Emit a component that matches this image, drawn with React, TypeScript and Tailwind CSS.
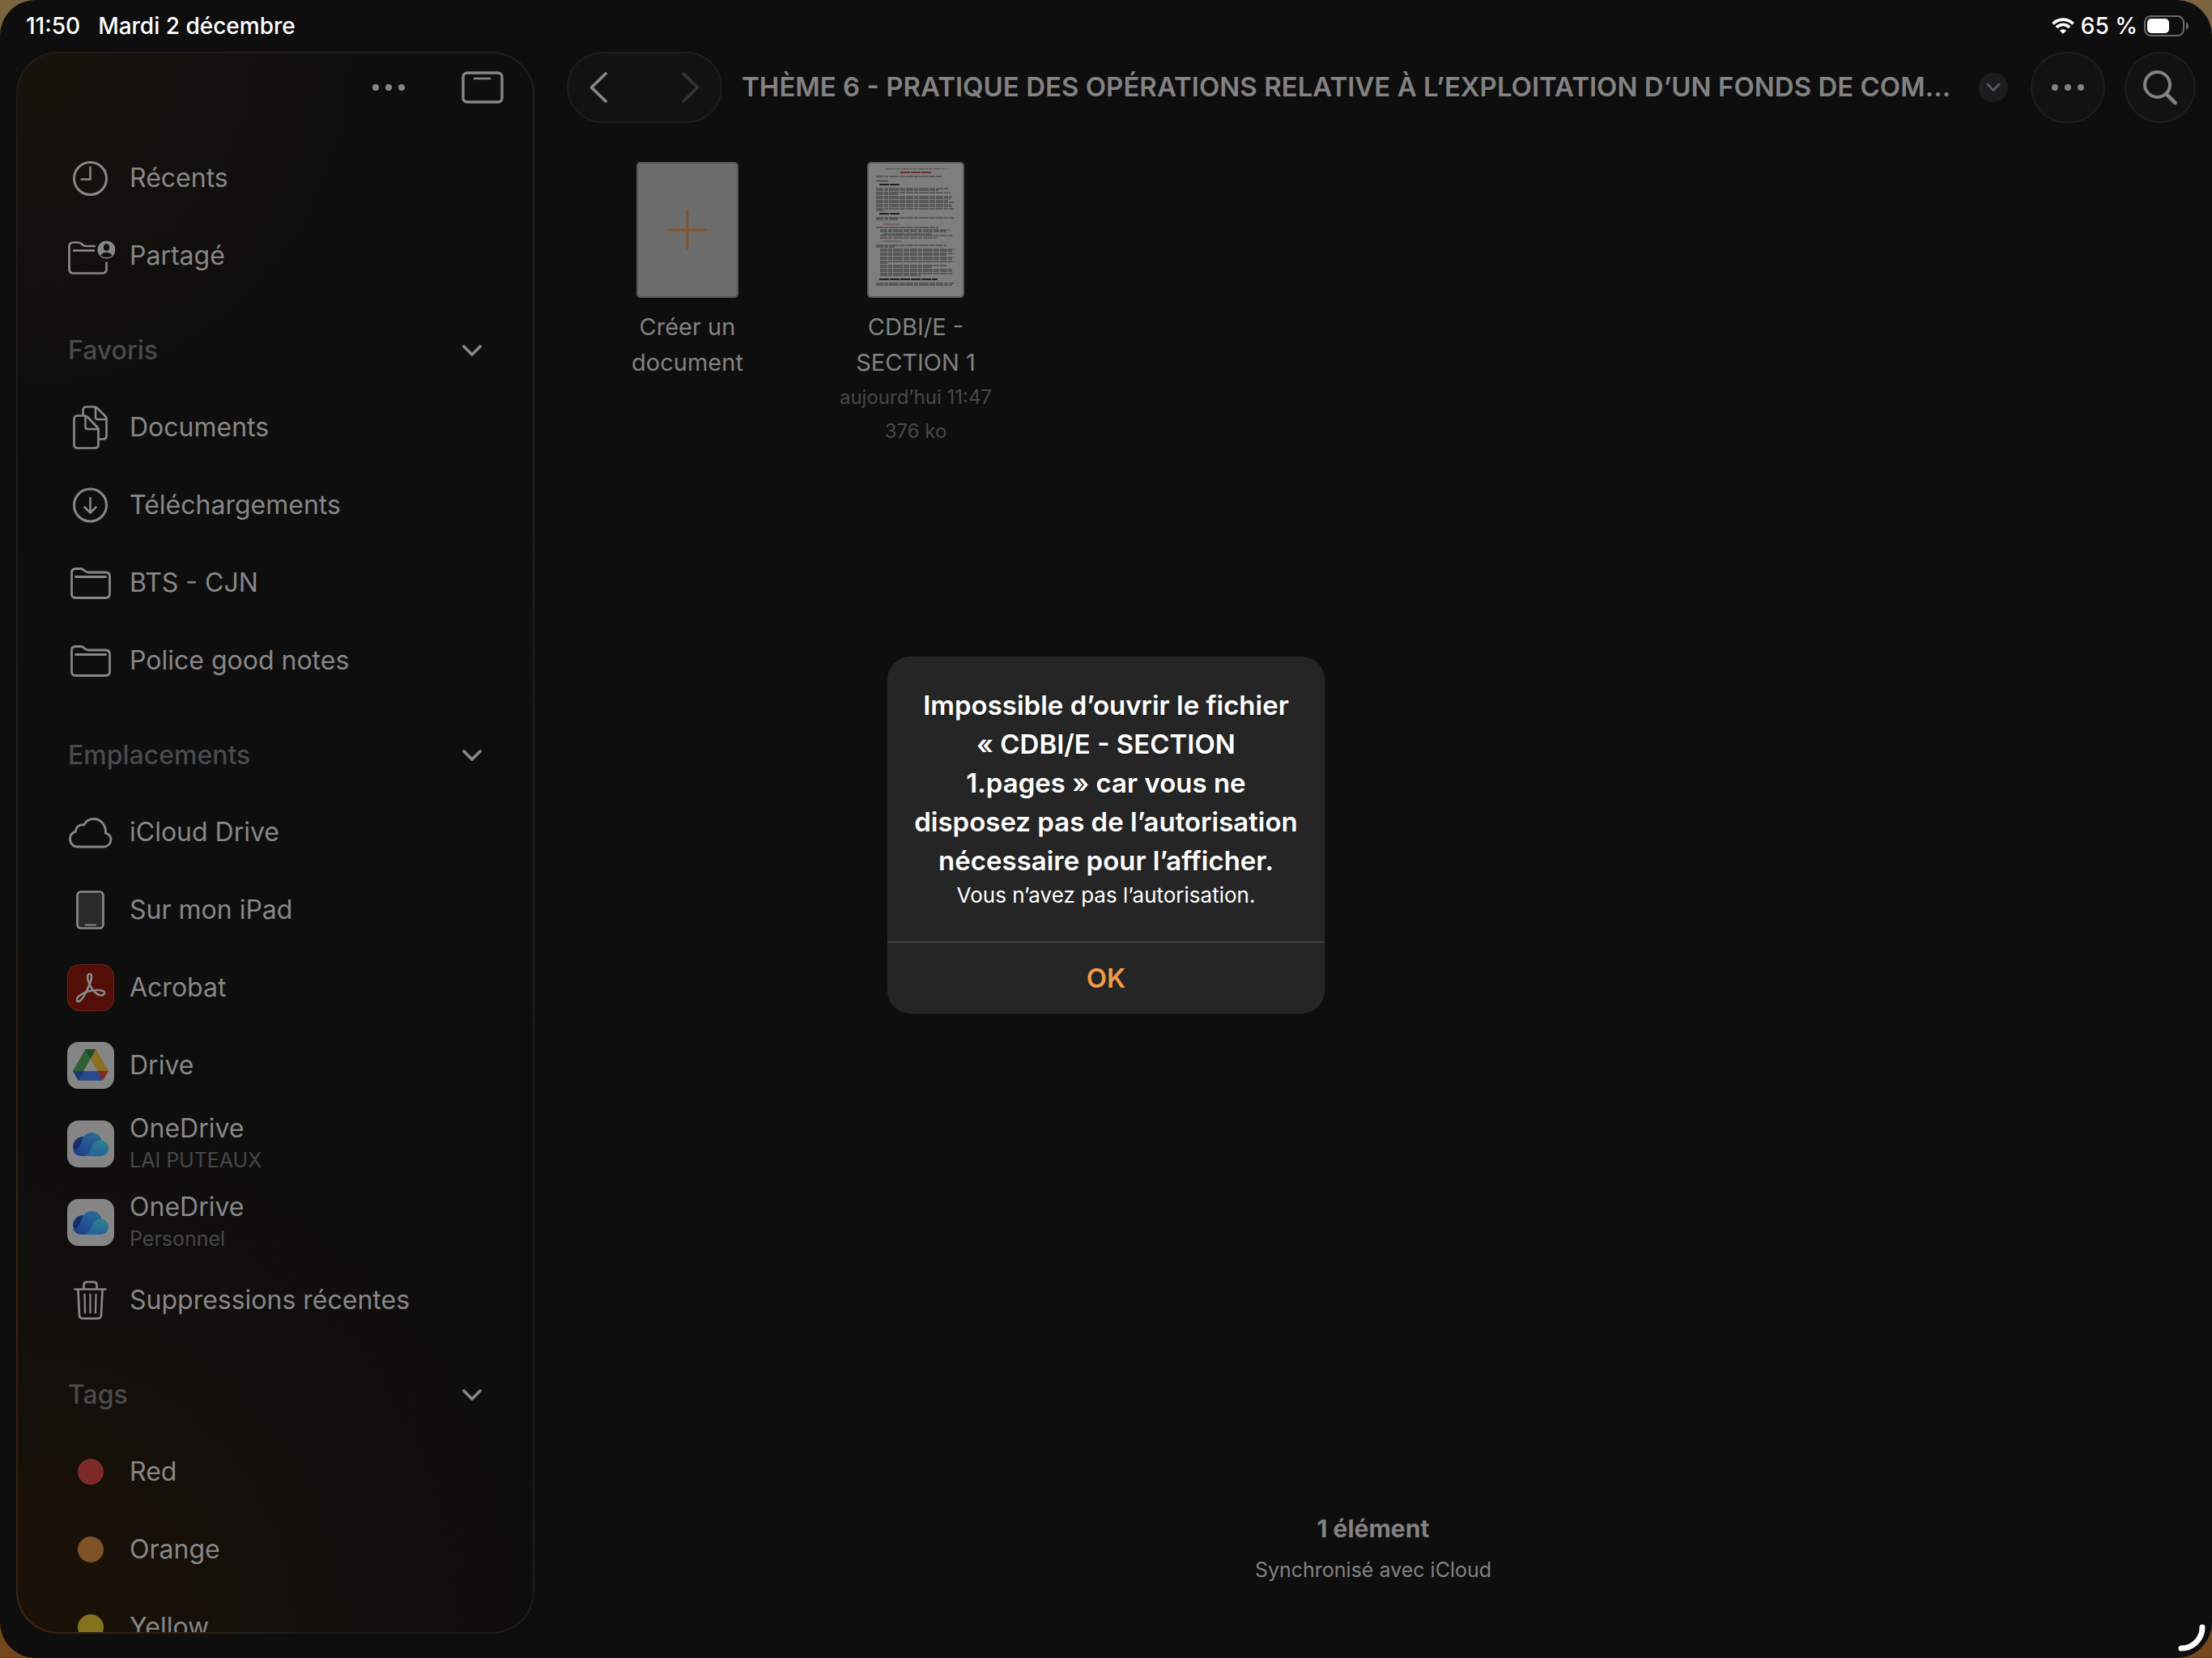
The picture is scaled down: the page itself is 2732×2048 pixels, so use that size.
import type { ReactNode } from 'react';

const OutlineIcon = ({ children }: { children: ReactNode }) => (
  <svg
    viewBox="0 0 60 60"
    className="size-[60px] shrink-0"
    fill="none"
    stroke="currentColor"
    strokeWidth="3"
    strokeLinecap="round"
    strokeLinejoin="round"
    aria-hidden="true"
  >
    {children}
  </svg>
);

const ClockIcon = () => (
  <OutlineIcon>
    <circle cx="29.5" cy="30.5" r="20" />
    <path d="M29.5 16.5V31.5H18.5" strokeWidth="2.6" />
  </OutlineIcon>
);

const SharedFolderIcon = () => (
  <OutlineIcon>
    <path d="M36 18H24C22 18 21.3 17.5 19.8 16.2L18.2 14.8C17 13.8 16.3 13.5 14.5 13.5H8.5C5 13.5 3.5 15 3.5 18.5V46.5C3.5 50 5 51.5 8.5 51.5H44.5C48 51.5 49.5 50 49.5 46.5V37.5" strokeWidth="2.7" strokeLinecap="butt" />
    <path d="M8 23.5H35" strokeWidth="2.7" strokeLinecap="butt" />
    <circle cx="49.5" cy="22.5" r="11" fill="currentColor" stroke="none" />
    <ellipse cx="49.5" cy="19.5" rx="3.6" ry="4.2" fill="#0e0e0e" stroke="none" />
    <path d="M42.5 29.5C44 26.8 46.5 25.7 49.5 25.7S55 26.8 56.5 29.5C54.5 31.3 52 32 49.5 32S44.5 31.3 42.5 29.5Z" fill="#0e0e0e" stroke="none" />
  </OutlineIcon>
);

const DocumentsIcon = () => (
  <OutlineIcon>
    <path d="M20.5 14V9C20.5 6 22 4.5 25 4.5H34.5C36 4.5 37 5 38 6L48 16C49 17 49.5 18 49.5 19.5V40C49.5 43 48 44.5 45 44.5H41" strokeWidth="2.7" />
    <path d="M36 5V17.5C36 19 37 20 38.5 20H49" strokeWidth="2.5" />
    <path d="M14 15.5H22.5C24 15.5 25 16 26 17L38 29.5C39 30.5 39.5 31.5 39.5 33V51C39.5 54 38 55.5 35 55.5H14C11 55.5 9.5 54 9.5 51V20C9.5 17 11 15.5 14 15.5Z" strokeWidth="2.7" />
    <path d="M23.5 16V29.5C23.5 31 24.5 32 26 32H39" strokeWidth="2.5" />
  </OutlineIcon>
);

const DownloadIcon = () => (
  <OutlineIcon>
    <circle cx="29.5" cy="30" r="20" />
    <path d="M29.5 21V39.5M22.5 32.5L29.5 39.5L36.5 32.5" strokeWidth="2.6" />
  </OutlineIcon>
);

const FolderIcon = () => (
  <OutlineIcon>
    <path d="M11.5 12.5H17.5C19.2 12.5 20 12.8 21.2 13.8L22.8 15.2C24.2 16.4 25 17 27 17H48.5C52 17 53.5 18.5 53.5 22V43.5C53.5 47 52 48.5 48.5 48.5H11.5C8 48.5 6.5 47 6.5 43.5V17.5C6.5 14 8 12.5 11.5 12.5Z" strokeWidth="2.8" />
    <path d="M11.5 22.5H48.5" strokeWidth="2.8" />
  </OutlineIcon>
);

const CloudIcon = () => (
  <OutlineIcon>
    <path d="M14 48H46C51 48 55 44 55 39C55 35.5 52.5 32.5 48.5 31.2C49 21.5 42.5 13.5 34 13.5C28 13.5 24 16.5 21.8 21C16.5 19.8 11.5 23.5 11.5 29.2C7 30.5 4.5 34 4.5 38.3C4.5 43.8 8.5 48 14 48Z" strokeWidth="2.8" />
  </OutlineIcon>
);

const TabletIcon = () => (
  <OutlineIcon>
    <rect x="13.5" y="7.5" width="32" height="45" rx="4.5" fill="#2a2a2a" strokeWidth="2.7" />
    <path d="M23.5 48.5H36" strokeWidth="2" />
  </OutlineIcon>
);

const TrashIcon = () => (
  <OutlineIcon>
    <path d="M10.5 16.5H48.5M21.5 16V11.5C21.5 8.8 23 7.5 25.5 7.5H33.5C36 7.5 37.5 8.8 37.5 11.5V16" strokeWidth="2.7" />
    <path d="M14.5 17L16 48.5C16.2 51.2 17.6 52.7 20.3 52.7H38.7C41.4 52.7 42.8 51.2 43 48.5L44.5 17" strokeWidth="2.7" />
    <path d="M22.5 23L23 45.5M29.5 23V45.5M36.5 23L36 45.5" strokeWidth="2.3" />
  </OutlineIcon>
);

const AcrobatIcon = () => (
  <svg viewBox="0 0 60 60" className="size-[60px] shrink-0" aria-hidden="true">
    <rect x="1.5" y="1.5" width="57" height="57" rx="14" fill="#530f07" stroke="#6b221b" />
    <path
      d="M28.8 13C26.3 13 25.5 16.5 26.6 20.5C28.5 28 34 36 40 38.8C43.5 40.3 46.8 39 47 36.5C47.2 33.8 43 33 38.5 33C31 33 22.5 35.5 17.5 38.8C13.5 41.5 11.8 44.5 13.3 46.3C15 48.2 18.5 46 21.5 40.5C26 32.5 30.5 22.5 31 17.5C31.2 14.5 30.5 13 28.8 13Z"
      fill="none"
      stroke="#888"
      strokeWidth="2.6"
    />
  </svg>
);

const DriveIcon = () => (
  <svg viewBox="0 0 60 60" className="size-[60px] shrink-0" aria-hidden="true">
    <rect x="1" y="1" width="58" height="58" rx="14" fill="#858585" />
    <path d="M23.5 10H36.5L29.8 22L14.5 48.5L8 36.8Z" fill="#2f6034" />
    <path d="M23.5 10H36.5L30 22Z" fill="#1f4a25" />
    <path d="M36.5 10L52 36.8H38L30 22Z" fill="#8b7020" />
    <path d="M8 36.8H38.5L45 48.8H15Z" fill="#294a8c" />
    <path d="M8 36.8H22L15 48.8Z" fill="#20396d" />
    <path d="M38 36.8H52L45 48.8Z" fill="#86291d" />
    <path d="M30 22L38 36.8H21.5Z" fill="#858585" />
  </svg>
);

const OneDriveIcon = () => (
  <svg viewBox="0 0 60 60" className="size-[60px] shrink-0" aria-hidden="true">
    <defs>
      <linearGradient id="od-back" x1="0" y1="0" x2="1" y2="1">
        <stop offset="0" stopColor="#1b3a72" />
        <stop offset="1" stopColor="#0e1f5a" />
      </linearGradient>
      <linearGradient id="od-mid" x1="1" y1="0" x2="0" y2="1">
        <stop offset="0" stopColor="#2c7090" />
        <stop offset="0.5" stopColor="#255694" />
        <stop offset="1" stopColor="#1d3a86" />
      </linearGradient>
      <linearGradient id="od-front" x1="0.7" y1="0" x2="0.5" y2="1">
        <stop offset="0" stopColor="#2f7f8f" />
        <stop offset="1" stopColor="#23649b" />
      </linearGradient>
    </defs>
    <rect x="1" y="1" width="58" height="58" rx="14" fill="#858585" />
    <path d="M8 34C8 26 14 20.5 22 21L20 40H13C9.5 39 8 36.5 8 34Z" fill="url(#od-back)" />
    <path d="M8.5 38C14 38.5 16.5 33 18.5 27C20.5 20 25 16 31 16C37.5 16 42.5 20 43.5 26L30 45H19C13 45 9 41.5 8.5 38Z" fill="url(#od-mid)" />
    <path d="M21 45C28 44 29.5 38 32 33C34.3 28 38 25.5 42 25.5C48 25.5 52 30 52 35.5C52 41 47.5 45 42 45Z" fill="url(#od-front)" />
  </svg>
);

const TagDot = ({ color }: { color: string }) => (
  <svg viewBox="0 0 60 60" className="size-[60px] shrink-0" aria-hidden="true">
    <circle cx="30" cy="30" r="16" fill={color} />
  </svg>
);

const ChevronDown = () => (
  <svg viewBox="0 0 26 16" className="h-4 w-[26px]" fill="none" stroke="currentColor" strokeWidth="3.8" strokeLinecap="round" strokeLinejoin="round" aria-hidden="true">
    <path d="M3 3L13 13L23 3" />
  </svg>
);

const Ellipsis = () => (
  <svg viewBox="0 0 40 8" className="h-2 w-10" fill="currentColor" aria-hidden="true">
    <circle cx="4" cy="4" r="4" />
    <circle cx="20" cy="4" r="4" />
    <circle cx="36" cy="4" r="4" />
  </svg>
);

type Item = { label: string; icon: ReactNode; detail?: string };

const topItems: Item[] = [
  { label: 'Récents', icon: <ClockIcon /> },
  { label: 'Partagé', icon: <SharedFolderIcon /> },
];

const sections: { title: string; items: Item[] }[] = [
  {
    title: 'Favoris',
    items: [
      { label: 'Documents', icon: <DocumentsIcon /> },
      { label: 'Téléchargements', icon: <DownloadIcon /> },
      { label: 'BTS - CJN', icon: <FolderIcon /> },
      { label: 'Police good notes', icon: <FolderIcon /> },
    ],
  },
  {
    title: 'Emplacements',
    items: [
      { label: 'iCloud Drive', icon: <CloudIcon /> },
      { label: 'Sur mon iPad', icon: <TabletIcon /> },
      { label: 'Acrobat', icon: <AcrobatIcon /> },
      { label: 'Drive', icon: <DriveIcon /> },
      { label: 'OneDrive', icon: <OneDriveIcon />, detail: 'LAI PUTEAUX' },
      { label: 'OneDrive', icon: <OneDriveIcon />, detail: 'Personnel' },
      { label: 'Suppressions récentes', icon: <TrashIcon /> },
    ],
  },
  {
    title: 'Tags',
    items: [
      { label: 'Red', icon: <TagDot color="#7b2a28" /> },
      { label: 'Orange', icon: <TagDot color="#7f5126" /> },
      { label: 'Yellow', icon: <TagDot color="#83731f" /> },
    ],
  },
];

function SidebarItem({ label, icon, detail }: Item) {
  return (
    <li>
      <a href="#" className={detail ? 'flex h-[97px] items-center gap-[18px]' : 'flex h-24 items-center gap-[18px]'}>
        {icon}
        <span className="flex flex-col">
          <span className="text-[32px] leading-[40px]">{label}</span>
          {detail && <span className="text-[25px] leading-[38px] text-[#474749]">{detail}</span>}
        </span>
      </a>
    </li>
  );
}

function Sidebar() {
  return (
    <aside className="ml-5 flex w-[640px] shrink-0 flex-col overflow-hidden rounded-[52px] border-2 border-transparent text-[#878787] [background:radial-gradient(circle_at_top_left,#17130c,transparent_22%)_padding-box,radial-gradient(circle_at_bottom_left,#1d1107,#120f0b_18%,#0e0e0e_34%)_padding-box,linear-gradient(75deg,#3d2410,#1f1c1a_35%,#1f1f1f)_border-box]">
      <div className="flex h-[106px] shrink-0 items-center justify-end gap-[70px] pr-9 pb-[22px]">
        <button type="button" aria-label="Plus">
          <Ellipsis />
        </button>
        <button type="button" aria-label="Masquer la barre latérale">
          <svg viewBox="0 0 52 40" className="h-10 w-[52px]" fill="none" stroke="currentColor" strokeWidth="3.4" strokeLinecap="round" aria-hidden="true">
            <rect x="2" y="2" width="48" height="36" rx="5" />
            <path d="M16 9H35" strokeWidth="2.6" />
          </svg>
        </button>
      </div>
      <nav className="pr-[62px] pl-[60px]">
        <ul>
          {topItems.map((item) => (
            <SidebarItem key={item.label} {...item} />
          ))}
        </ul>
        {sections.map(({ title, items }) => (
          <section key={title} className="pt-5">
            <h2>
              <button type="button" className="flex h-24 w-full items-center justify-between pt-0.5 pl-0.5">
                <span className="text-[32px] font-medium text-[#4a4a4c]">{title}</span>
                <ChevronDown />
              </button>
            </h2>
            <ul>
              {items.map((item) => (
                <SidebarItem key={item.label + item.detail} {...item} />
              ))}
            </ul>
          </section>
        ))}
      </nav>
    </aside>
  );
}

function StatusBar() {
  return (
    <div className="flex h-16 shrink-0 items-center justify-between pr-7 pl-8 text-[28px] font-medium text-white">
      <div className="flex gap-[22px]">
        <span>11:50</span>
        <span>Mardi 2 décembre</span>
      </div>
      <div className="flex items-center gap-2">
        <svg viewBox="0 0 28 20" className="h-5 w-7" fill="none" stroke="white" strokeWidth="3.8" aria-hidden="true">
          <path d="M1.5 7.3C8.5 0.4 19.5 0.4 26.5 7.3" />
          <path d="M6 11.8C10.5 7.3 17.5 7.3 22 11.8" />
          <path d="M14 19.8L9.8 15.8C12 13.6 16 13.6 18.2 15.8Z" fill="white" stroke="none" />
        </svg>
        <span>65 %</span>
        <svg viewBox="0 0 56 26" className="h-[26px] w-14" aria-hidden="true">
          <rect x="1" y="1" width="48" height="24" rx="7.5" fill="none" stroke="#6a6a6a" strokeWidth="2" />
          <rect x="4" y="4" width="27" height="18" rx="5" fill="white" />
          <path d="M52 8.5C54 9.5 55 11 55 13S54 16.5 52 17.5Z" fill="#6a6a6a" />
        </svg>
      </div>
    </div>
  );
}

function Toolbar() {
  return (
    <header className="flex h-[88px] items-center">
      <div className="flex h-[88px] w-[192px] shrink-0 items-center justify-between rounded-full border-2 border-[#1e1e1e] bg-[#121212] px-[26px] text-[#878787]">
        <button type="button" aria-label="Précédent">
          <svg viewBox="0 0 22 38" className="h-[38px] w-[22px]" fill="none" stroke="currentColor" strokeWidth="3.8" strokeLinecap="round" strokeLinejoin="round">
            <path d="M20 2L2.5 19L20 36" />
          </svg>
        </button>
        <button type="button" aria-label="Suivant" disabled className="text-[#343436]">
          <svg viewBox="0 0 22 38" className="h-[38px] w-[22px]" fill="none" stroke="currentColor" strokeWidth="3.8" strokeLinecap="round" strokeLinejoin="round">
            <path d="M2 2L19.5 19L2 36" />
          </svg>
        </button>
      </div>
      <h1 className="ml-6 min-w-0 flex-1 truncate text-[33px] font-semibold text-[#828282]">
        THÈME 6 - PRATIQUE DES OPÉRATIONS RELATIVE À L’EXPLOITATION D’UN FONDS DE COM...
      </h1>
      <button type="button" aria-label="Options du dossier" className="ml-5 flex size-9 shrink-0 items-center justify-center rounded-full bg-[#1c1c1e] text-[#58585a]">
        <svg viewBox="0 0 18 12" className="h-3 w-[18px]" fill="none" stroke="currentColor" strokeWidth="3" strokeLinecap="round" strokeLinejoin="round">
          <path d="M2 2L9 9.5L16 2" />
        </svg>
      </button>
      <button type="button" aria-label="Plus" className="ml-7 flex h-[88px] w-[92px] shrink-0 items-center justify-center rounded-full border-2 border-[#1e1e1e] bg-[#121212] text-[#828282]">
        <Ellipsis />
      </button>
      <button type="button" aria-label="Rechercher" className="ml-6 flex size-[88px] shrink-0 items-center justify-center rounded-full border-2 border-[#1e1e1e] bg-[#121212] text-[#828282]">
        <svg viewBox="0 0 44 44" className="size-11" fill="none" stroke="currentColor" strokeWidth="4" strokeLinecap="round">
          <circle cx="18.5" cy="18.5" r="15.5" />
          <path d="M29.5 30L40.5 41" strokeWidth="4.6" />
        </svg>
      </button>
    </header>
  );
}

// Lines of the miniature page: y, x start, x end, bold
const bodyLines: [number, number, number, boolean?][] = [
  [18, 11, 92], [28, 15, 40, true], [33, 11, 100], [35, 11, 88], [38, 11, 103], [40, 11, 38],
  [43, 11, 105], [45, 11, 103], [48, 11, 100], [50, 11, 107], [53, 11, 103], [55, 11, 105],
  [58, 11, 107], [60, 11, 22], [64, 15, 41, true], [69, 11, 107], [71, 11, 38],
  [81, 11, 88], [84, 16, 102], [86, 16, 98], [89, 19, 80], [91, 16, 107], [94, 16, 86],
  [103, 11, 98], [105, 11, 34], [108, 16, 107], [110, 16, 105], [113, 16, 107], [115, 16, 98],
  [118, 16, 107], [120, 16, 105], [123, 16, 107], [125, 16, 25], [128, 16, 98], [130, 16, 80],
  [133, 16, 105], [135, 16, 105], [138, 16, 107], [140, 16, 66], [145, 15, 87, true],
  [150, 11, 107], [152, 11, 105],
];

const PagePreview = () => (
  <svg viewBox="0 0 120 168" className="h-[168px] w-[120px]" fill="none" aria-hidden="true">
    <rect x="1" y="1" width="118" height="166" rx="4" fill="#7e7e7e" stroke="#5a5a5a" strokeWidth="2" />
    <path d="M22 8.5H98" stroke="#5c5c5c" strokeWidth="1.3" strokeDasharray="9 1 3 1 5 1" />
    <path d="M41 13H79" stroke="#6b2c2c" strokeWidth="1.8" strokeDasharray="12 1" />
    <path d="M11 23.5H26" stroke="#30564f" strokeWidth="1.5" />
    <path d="M19 77H40M19 98H42" stroke="#6d4148" strokeWidth="1.2" />
    {bodyLines.map(([y, x1, x2, bold]) => (
      <path
        key={y}
        d={`M${x1} ${y}H${x2}`}
        stroke={bold ? '#222' : '#4c4c4c'}
        strokeWidth={bold ? 1.8 : 1.3}
        strokeDasharray={bold ? '12 1' : '9 1 5 1 12 1 7 1'}
      />
    ))}
  </svg>
);

function FileGrid() {
  return (
    <ul className="flex flex-1 gap-12 pt-12 pl-8 text-center text-[29px] leading-[44px] text-[#828282]">
      <li className="w-[234px]">
        <button type="button" className="flex w-full flex-col items-center gap-3.5">
          <span className="flex h-[168px] w-[126px] items-center justify-center rounded-[5px] border-2 border-[#555] bg-[#6c6c6c]">
            <svg viewBox="0 0 50 50" className="size-[50px]" stroke="#85542a" strokeWidth="2.8" strokeLinecap="round" aria-hidden="true">
              <path d="M25 1.5V48.5M1.5 25H48.5" />
            </svg>
          </span>
          <span className="w-40">Créer un document</span>
        </button>
      </li>
      <li className="w-[234px]">
        <button type="button" className="flex w-full flex-col items-center gap-3.5">
          <PagePreview />
          <span className="flex flex-col items-center">
            <span className="w-40">CDBI/E - SECTION 1</span>
            <span className="text-[24px] leading-[42px] text-[#48484a]">aujourd’hui 11:47</span>
            <span className="text-[24px] leading-[42px] text-[#48484a]">376 ko</span>
          </span>
        </button>
      </li>
    </ul>
  );
}

function Alert() {
  return (
    <div className="absolute inset-0 flex items-center justify-center pt-[15px]">
      <div
        role="alertdialog"
        aria-labelledby="alert-title"
        aria-describedby="alert-text"
        className="w-[540px] overflow-hidden rounded-[28px] bg-[#252525] text-center text-white"
      >
        <div className="px-7 pt-9 pb-[38px]">
          <h2 id="alert-title" className="text-[33px] leading-[48px] font-semibold">
            Impossible d’ouvrir le fichier «&nbsp;CDBI/E - SECTION
            <br />
            1.pages&nbsp;» car vous ne disposez pas de l’autorisation nécessaire pour l’afficher.
          </h2>
          <p id="alert-text" className="text-[26px] leading-[38px]">
            Vous n’avez pas l’autorisation.
          </p>
        </div>
        <button type="button" className="h-[89px] w-full border-t border-[#5c5c5c] pt-0.5 text-[33px] font-semibold text-[#f09a4a]">
          OK
        </button>
      </div>
    </div>
  );
}

export default function App() {
  return (
    <div className="h-screen bg-[linear-gradient(to_bottom,#7a6540,#74481c)] font-['Inter','Liberation_Sans',sans-serif]">
      <div className="relative flex h-full flex-col overflow-hidden rounded-[44px] bg-[#0e0e0e]">
        <StatusBar />
        <div className="flex min-h-0 flex-1 pb-[30px]">
          <Sidebar />
          <main className="flex min-w-0 flex-1 flex-col pr-5 pl-10">
            <Toolbar />
            <FileGrid />
            <footer className="pr-5 pb-[54px] text-center text-[#828282]">
              <p className="text-[30px] leading-[52px] font-bold">1 élément</p>
              <p className="text-[25px] leading-[50px]">Synchronisé avec iCloud</p>
            </footer>
          </main>
        </div>
        <Alert />
        <svg viewBox="0 0 34 34" className="absolute right-2 bottom-2 size-[34px]" fill="none" stroke="white" strokeWidth="7" strokeLinecap="round" aria-hidden="true">
          <path d="M4 30C18.500 30 30 18.500 30 4" />
        </svg>
      </div>
    </div>
  );
}
